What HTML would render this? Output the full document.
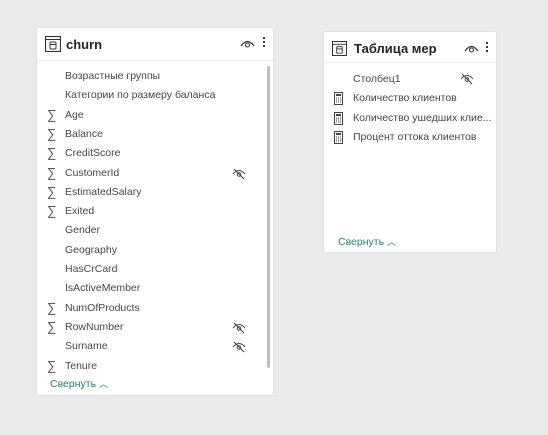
<!DOCTYPE html>
<html><head><meta charset="utf-8"><style>
body{margin:0;width:548px;height:435px;background:#eaeaea;font-family:"Liberation Sans","Noto Sans CJK SC",sans-serif;position:relative;overflow:hidden}
.card{position:absolute;background:#fff;box-shadow:0 0 2px rgba(0,0,0,.12)}
.hdr{position:absolute;left:0;right:0;top:0;border-bottom:1px solid #ececec}
.title{position:absolute;font-size:13px;font-weight:bold;color:#252423}
.row{position:absolute;font-size:10.5px;color:#484644;white-space:nowrap}
.sig{position:absolute;font-size:13px;color:#555;line-height:1}
.col{position:absolute;font-size:10.5px;color:#2d7b6f}
.ic{position:absolute}
</style></head><body>

<div class="card" style="left:37px;top:28px;width:236px;height:367px">
  <div class="hdr" style="height:32px"></div>
  <svg class="ic" style="left:8px;top:8px" width="16" height="16" viewBox="0 0 16 16"><rect x="0.5" y="0.5" width="15" height="15" fill="none" stroke="#333" stroke-width="1.2"/><line x1="0.5" y1="3.5" x2="15.5" y2="3.5" stroke="#333"/><rect x="5" y="6" width="6" height="7" rx="1" fill="none" stroke="#333"/><line x1="5" y1="8.5" x2="11" y2="8.5" stroke="#333"/></svg>
  <div class="title" style="left:29px;top:9px">churn</div>
  <svg class="ic" style="left:203px;top:10px" width="15" height="11" viewBox="0 0 15 11"><path d="M1 8 Q7.5 -1 14 8" fill="none" stroke="#333" stroke-width="1.2"/><circle cx="7.5" cy="7" r="2" fill="none" stroke="#333" stroke-width="1.1"/></svg>
  <div style="position:absolute;left:226px;top:9px;width:2px;height:2px;background:#333;box-shadow:0 4px #333,0 8px #333"></div>
  <div style="position:absolute;left:230px;top:38px;width:3px;height:302px;background:#bdbdbd;border-radius:2px"></div>
</div>

<div class="card" style="left:324px;top:32px;width:172px;height:220px">
  <div class="hdr" style="height:30px"></div>
  <svg class="ic" style="left:8px;top:9px" width="15" height="15" viewBox="0 0 16 16"><rect x="0.5" y="0.5" width="15" height="15" fill="none" stroke="#333" stroke-width="1.2"/><line x1="0.5" y1="3.5" x2="15.5" y2="3.5" stroke="#333"/><rect x="5" y="6" width="6" height="7" rx="1" fill="none" stroke="#333"/><line x1="5" y1="8.5" x2="11" y2="8.5" stroke="#333"/></svg>
  <div class="title" style="left:30px;top:9px">Таблица мер</div>
  <svg class="ic" style="left:140px;top:11px" width="15" height="11" viewBox="0 0 15 11"><path d="M1 8 Q7.5 -1 14 8" fill="none" stroke="#333" stroke-width="1.2"/><circle cx="7.5" cy="7" r="2" fill="none" stroke="#333" stroke-width="1.1"/></svg>
  <div style="position:absolute;left:162px;top:10px;width:2px;height:2px;background:#333;box-shadow:0 4px #333,0 8px #333"></div>
</div>

<div id="rows"></div>
<script>
var L=[["Возрастные группы",0,0],["Категории по размеру баланса",0,0],["Age",1,0],["Balance",1,0],["CreditScore",1,0],["CustomerId",1,1],["EstimatedSalary",1,0],["Exited",1,0],["Gender",0,0],["Geography",0,0],["HasCrCard",0,0],["IsActiveMember",0,0],["NumOfProducts",1,0],["RowNumber",1,1],["Surname",0,1],["Tenure",1,0]];
var h="";
var hid='<svg width="14" height="12" viewBox="0 0 14 12"><path d="M1 6 Q7 -1 13 6" fill="none" stroke="#444" stroke-width="1"/><circle cx="7" cy="6.5" r="1.8" fill="none" stroke="#444"/><line x1="2" y1="1" x2="12" y2="11" stroke="#444" stroke-width="1.1"/></svg>';
L.forEach(function(r,i){var y=Math.round(70+i*19.3);
h+='<div class="row" style="left:65px;top:'+y+'px">'+r[0]+'</div>';
if(r[1])h+='<div class="sig" style="left:47px;top:'+(y-1)+'px">∑</div>';
if(r[2])h+='<div class="ic" style="left:232px;top:'+(y)+'px">'+hid+'</div>';});
h+='<div class="col" style="left:50px;top:377px">Свернуть <span style="font-size:9px">︿</span></div>';
var M=[["Столбец1",0],["Количество клиентов",1],["Количество ушедших клие...",1],["Процент оттока клиентов",1]];
var calc='<svg width="9" height="13" viewBox="0 0 9 13"><rect x="0.5" y="0.5" width="8" height="12" fill="none" stroke="#444"/><rect x="2" y="2" width="5" height="2" fill="#444"/><path d="M2 6h1M4 6h1M6 6h1M2 8h1M4 8h1M6 8h1M2 10h1M4 10h1M6 10h1" stroke="#444"/></svg>';
M.forEach(function(r,i){var y=Math.round(73+i*19.3);
h+='<div class="row" style="left:353px;top:'+y+'px">'+r[0]+'</div>';
if(r[1])h+='<div class="ic" style="left:334px;top:'+(y)+'px">'+calc+'</div>';});
h+='<div class="ic" style="left:460px;top:72px">'+hid+'</div>';
h+='<div class="col" style="left:338px;top:235px">Свернуть <span style="font-size:9px">︿</span></div>';
document.getElementById("rows").innerHTML=h;
</script>
</body></html>
